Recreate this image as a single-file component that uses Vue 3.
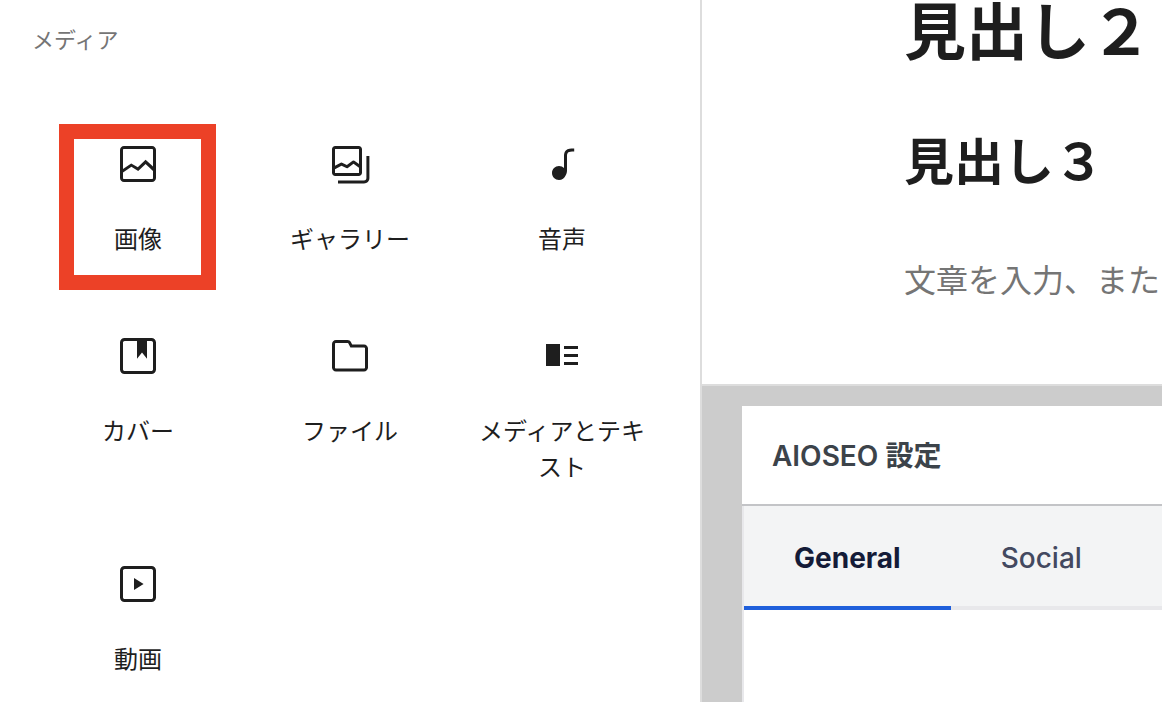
<script setup>
import { ref } from 'vue'

const box =
  'M18.7 3H5.3C4 3 3 4 3 5.3v13.4C3 20 4 21 5.3 21h13.4c1.3 0 2.3-1 2.3-2.3V5.3C21 4 20 3 18.7 3zm.8 15.7c0 .4-.4.8-.8.8H5.3c-.4 0-.8-.4-.8-.8V5.3c0-.4.4-.8.8-.8'

const blocks = [
  {
    label: '画像',
    highlighted: true,
    path: 'M19 3H5c-1.1 0-2 .9-2 2v14c0 1.1.9 2 2 2h14c1.1 0 2-.9 2-2V5c0-1.1-.9-2-2-2zM5 4.5h14c.3 0 .5.2.5.5v8.2L15.8 9.9 11.9 13.6 8.6 11.7 4.5 14.5V5c0-.3.2-.5.5-.5zm14 15H5c-.3 0-.5-.2-.5-.5v-2.7l4.2-2.9 3.4 2.1 3.7-3.5 3.7 3.5V19c0 .3-.2.5-.5.5z'
  },
  {
    label: 'ギャラリー',
    path: 'M16.375 4.5H4.625a.125.125 0 0 0-.125.125v8.254l2.859-1.54a.75.75 0 0 1 .68-.016l2.384 1.142 2.89-2.074a.75.75 0 0 1 .874 0l2.313 1.66V4.625a.125.125 0 0 0-.125-.125Zm.125 9.398-2.75-1.975-2.813 2.02a.75.75 0 0 1-.76.067l-2.444-1.17L4.5 14.583v1.792c0 .069.056.125.125.125h11.75a.125.125 0 0 0 .125-.125v-2.477ZM4.625 3C3.728 3 3 3.728 3 4.625v11.75C3 17.273 3.728 18 4.625 18h11.75c.898 0 1.625-.727 1.625-1.625V4.625C18 3.728 17.273 3 16.375 3H4.625ZM20.2 8v11c0 .7-.4 1.2-1.2 1.2H6v1.5h13c1.6 0 2.7-1.1 2.7-2.7V8h-1.5Z'
  },
  {
    label: '音声',
    path: 'M17.7 4.3c-1.2 0-2.8 0-3.8 1-.6.6-.9 1.5-.9 2.6V14c-.6-.6-1.5-1-2.5-1C8.6 13 7 14.6 7 16.5S8.6 20 10.5 20c1.5 0 2.8-1 3.3-2.3.5-.8.7-1.8.7-2.5V7.9c0-.7.2-1.2.5-1.6.6-.6 1.8-.6 2.8-.6h.3V4.3h-.4z'
  },
  {
    label: 'カバー',
    path: box + 'h6.2v8.9l2.5-3.1 2.5 3.1V4.5h2.2c.4 0 .8.4.8.8v13.4z'
  },
  {
    label: 'ファイル',
    path: 'M19 6.2h-5.9l-.6-1.1c-.3-.7-1-1.1-1.8-1.1H5c-1.1 0-2 .9-2 2v11.8c0 1.1.9 2 2 2h14c1.1 0 2-.9 2-2V8.2c0-1.1-.9-2-2-2zm.5 11.6c0 .3-.2.5-.5.5H5c-.3 0-.5-.2-.5-.5V6c0-.3.2-.5.5-.5h5.8c.2 0 .4.1.4.3l1 2H19c.2 0 .5.2.5.5v9.5z'
  },
  {
    label: 'メディアとテキスト',
    path: 'M4 17h7V6H4v11zM13 7v1.5h7V7h-7zm0 5.5h7V11h-7v1.5zm0 4h7V15h-7v1.5z'
  },
  {
    label: '動画',
    path: box + 'h13.4c.4 0 .8.4.8.8v13.4zM10 15l4.8-3L10 9v6z'
  }
]

const tabs = ['General', 'Social']
const activeTab = ref('General')
</script>

<template>
  <div class="editor">
    <aside class="inserter">
      <h2 class="category">メディア</h2>
      <ul class="blocks">
        <li v-for="block in blocks" :key="block.label" class="block">
          <button type="button" class="block-button">
            <svg class="icon" viewBox="0 0 24 24" aria-hidden="true">
              <path :d="block.path" fill-rule="evenodd" />
            </svg>
            <span class="label">{{ block.label }}</span>
          </button>
          <span v-if="block.highlighted" class="marker"></span>
        </li>
      </ul>
    </aside>

    <main class="content">
      <section class="canvas">
        <h2 class="heading-two">見出し２</h2>
        <h3 class="heading-three">見出し３</h3>
        <p class="prompt">文章を入力、また</p>
      </section>

      <section class="meta">
        <div class="postbox">
          <h2 class="postbox-title">AIOSEO 設定</h2>
          <div class="panel">
            <nav class="tabs" role="tablist">
              <button
                v-for="tab in tabs"
                :key="tab"
                type="button"
                role="tab"
                class="tab"
                :class="{ active: tab === activeTab }"
                :aria-selected="tab === activeTab"
                @click="activeTab = tab"
              >
                {{ tab }}
              </button>
            </nav>
          </div>
        </div>
      </section>
    </main>
  </div>
</template>

<style>
body {
  margin: 0;
  background: #fff;
}
</style>

<style scoped>
* {
  box-sizing: border-box;
}

.editor {
  display: grid;
  grid-template-columns: minmax(0, 702fr) minmax(0, 460fr);
  min-height: 100vh;
  font-family: Inter, "Noto Sans CJK JP", sans-serif;
  color: #1e1e1e;
}

h2,
h3,
p,
ul {
  margin: 0;
  padding: 0;
}

button {
  margin: 0;
  border: 0;
  background: none;
  font: inherit;
  color: inherit;
  cursor: pointer;
}

.inserter {
  padding: 24px 32px 0;
  border-right: 2px solid #ddd;
}

.category {
  font-size: 22px;
  line-height: 32px;
  font-weight: 400;
  color: #757575;
}

.blocks {
  display: grid;
  grid-template-columns: repeat(3, minmax(0, 1fr));
  margin-top: 60px;
  list-style: none;
}

.block {
  position: relative;
}

.block-button {
  display: flex;
  flex-direction: column;
  align-items: center;
  gap: 34px;
  width: 100%;
  padding: 24px 16px 50px;
}

/* The last row needs no space below it */
.block:last-child .block-button {
  padding-bottom: 0;
}

.icon {
  width: 48px;
  height: 48px;
  fill: #1e1e1e;
}

.label {
  font-size: 24px;
  line-height: 36px;
}

.marker {
  position: absolute;
  top: 8px;
  left: 27px;
  width: 157px;
  height: 166px;
  border: 15px solid #ec4127;
  pointer-events: none;
}

.content {
  display: flex;
  flex-direction: column;
  min-width: 0;
}

.canvas {
  padding: 0 0 79px 202px;
}

.heading-two {
  font-size: 62px;
  line-height: 66px;
  font-weight: 700;
}

.heading-three {
  margin-top: 64px;
  font-size: 50px;
  line-height: 64px;
  font-weight: 700;
}

.prompt {
  margin-top: 63px;
  font-size: 32px;
  line-height: 48px;
  white-space: nowrap;
  color: #757575;
}

.meta {
  flex: 1;
  display: flex;
  padding: 20px 0 0 40px;
  border-top: 2px solid #ddd;
  background: #ccc;
}

.postbox {
  flex: 1;
  display: flex;
  flex-direction: column;
  min-width: 0;
  background: #fff;
}

.postbox-title {
  padding: 32px 30px 30px;
  border-bottom: 2px solid #c3c4c7;
  font-size: 28px;
  line-height: 36px;
  font-weight: 600;
  color: #3c434a;
}

.panel {
  flex: 1;
  border-left: 2px solid #e8e8eb;
}

.tabs {
  display: flex;
  background: #f3f4f5;
  border-bottom: 4px solid #e8e8eb;
}

.tab {
  margin-bottom: -4px;
  padding: 32px 50px 28px;
  border-bottom: 4px solid transparent;
  font-size: 28px;
  line-height: 40px;
  font-weight: 500;
  color: #434960;
}

.tab.active {
  border-bottom-color: #1f5fdb;
  font-weight: 700;
  color: #141b38;
}
</style>
